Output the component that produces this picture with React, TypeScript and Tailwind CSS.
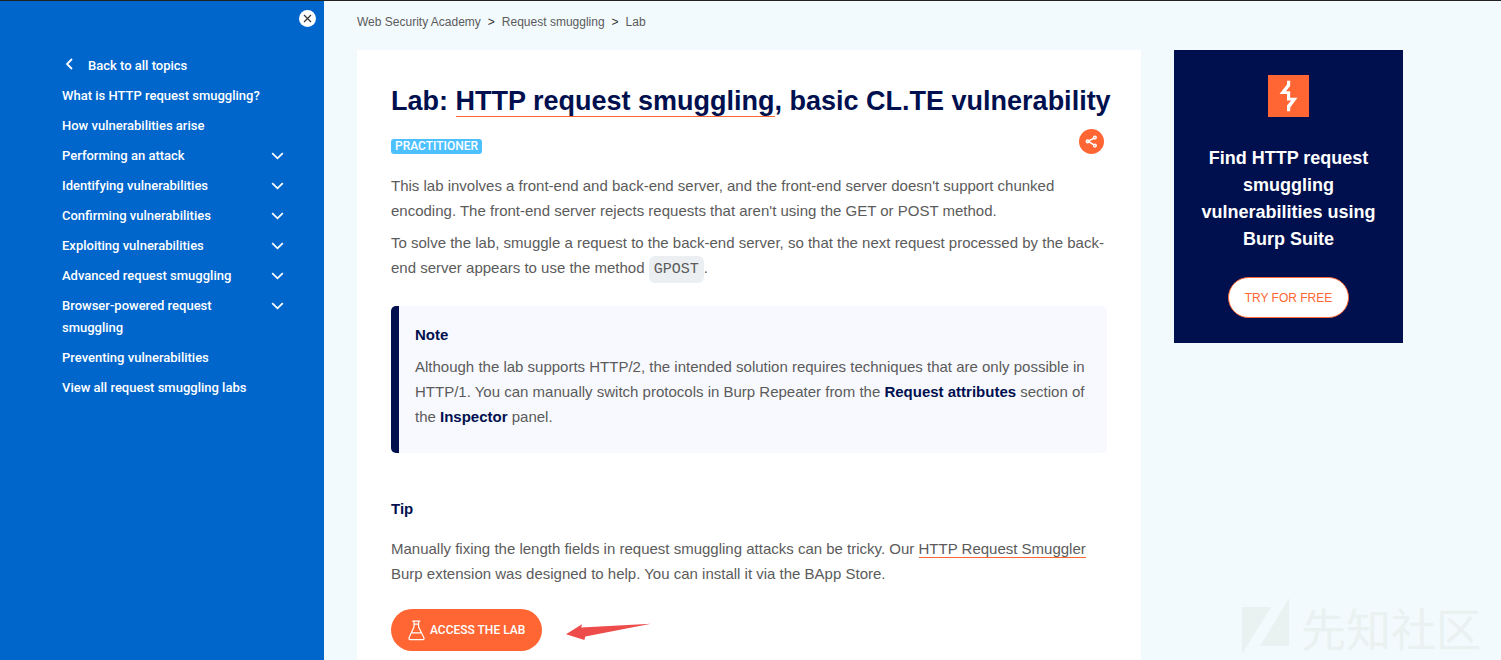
import React from "react";

type NavItem = { label: string; expandable?: boolean };

const navItems: NavItem[] = [
  { label: "What is HTTP request smuggling?" },
  { label: "How vulnerabilities arise" },
  { label: "Performing an attack", expandable: true },
  { label: "Identifying vulnerabilities", expandable: true },
  { label: "Confirming vulnerabilities", expandable: true },
  { label: "Exploiting vulnerabilities", expandable: true },
  { label: "Advanced request smuggling", expandable: true },
  { label: "Browser-powered request smuggling", expandable: true },
  { label: "Preventing vulnerabilities" },
  { label: "View all request smuggling labs" },
];

function Sidebar() {
  return (
    <aside className="flex w-[324px] shrink-0 flex-col bg-[#0066cc] font-[Roboto,sans-serif] text-[13px] leading-[22px] font-medium text-white">
      <div className="flex justify-end pt-[9px] pr-2">
        <button type="button" aria-label="Close menu" className="flex h-[17px] w-[17px] items-center justify-center rounded-full bg-white">
          <svg width="9" height="9" viewBox="0 0 9 9" stroke="#333332" strokeWidth="1.2" fill="none">
            <path d="M1 1 8 8M8 1 1 8" />
          </svg>
        </button>
      </div>
      <nav className="mt-7 flex flex-col gap-2 pr-10 pl-[62px]">
        <a href="#topics" className="flex items-center">
          <svg width="14" height="14" viewBox="0 0 14 14" fill="none" stroke="white" strokeWidth="1.8" className="mb-1 shrink-0">
            <path d="M10 2 5 7l5 5" />
          </svg>
          <span className="ml-3">Back to all topics</span>
        </a>
        {navItems.map((item) => (
          <div key={item.label} className="flex items-start justify-between">
            <a href="#topic" className={item.expandable ? "max-w-[180px]" : ""}>
              {item.label}
            </a>
            {item.expandable && (
              <button type="button" aria-label={`Expand ${item.label}`} className="flex h-[22px] w-[13px] items-center justify-center">
                <svg width="13" height="8" viewBox="0 0 13 8" fill="none" stroke="white" strokeWidth="1.8">
                  <path d="M1.2 1.2 6.5 6.3l5.3-5.1" />
                </svg>
              </button>
            )}
          </div>
        ))}
      </nav>
    </aside>
  );
}

function Breadcrumb() {
  return (
    <nav aria-label="Breadcrumb" className="flex h-[49px] items-start gap-[7px] pt-3 text-[12px] leading-[18px] text-[#5b5b5b]">
      <a href="#academy">Web Security Academy</a>
      <span className="text-[#333332]">&gt;</span>
      <a href="#smuggling">Request smuggling</a>
      <span className="text-[#333332]">&gt;</span>
      <a href="#lab">Lab</a>
    </nav>
  );
}

function LabCard() {
  return (
    <article className="min-w-0 flex-1 bg-white px-[34px] pt-[34px] text-[15px] leading-[25px] text-[#5b5b5b]">
      <h1 className="text-[27px] leading-[34px] font-bold text-[#00104f] lg:whitespace-nowrap">
        Lab:{" "}
        <a href="#smuggling" className="border-b border-[#ff6633]">
          HTTP request smuggling
        </a>
        , basic CL.TE vulnerability
      </h1>
      <div className="mt-[11px] flex items-end justify-between pr-[3px]">
        <span className="rounded-[3px] bg-[#4dc0ff] px-1 font-[Roboto,sans-serif] text-[12px] leading-[15px] font-medium text-white">PRACTITIONER</span>
        <button type="button" aria-label="Share" className="flex h-[25px] w-[25px] items-center justify-center rounded-full bg-[#ff6633]">
          <svg width="13" height="13" viewBox="0 0 13 13" fill="none" stroke="white" strokeWidth="1.5">
            <path d="M9.3 3 3.2 6.2l6.1 4" />
            <circle cx="9.9" cy="2.6" r="1.3" />
            <circle cx="2.6" cy="6.4" r="1.3" />
            <circle cx="9.9" cy="10.6" r="1.3" />
          </svg>
        </button>
      </div>
      <p className="mt-[19px]">
        This lab involves a front-end and back-end server, and the front-end server doesn't support chunked encoding. The front-end server
        rejects requests that aren't using the GET or POST method.
      </p>
      <p className="mt-[7px]">
        To solve the lab, smuggle a request to the back-end server, so that the next request processed by the back-end server appears to use
        the method{" "}
        <code className="rounded-md bg-[#ebeff2] px-[5px] py-[5px] font-['Liberation_Mono',monospace] text-[15px] leading-[14px]">GPOST</code>.
      </p>
      <section className="mt-[26px] rounded-[5px] border-l-8 border-[#00104f] bg-[#f8f9fe] px-4 pt-4 pb-6">
        <h2 className="font-bold text-[#00104f]">Note</h2>
        <p className="mt-[7px]">
          Although the lab supports HTTP/2, the intended solution requires techniques that are only possible in HTTP/1. You can manually
          switch protocols in Burp Repeater from the <b className="text-[#00104f]">Request attributes</b> section of the{" "}
          <b className="text-[#00104f]">Inspector</b> panel.
        </p>
      </section>
      <h2 className="mt-[43px] font-bold text-[#00104f]">Tip</h2>
      <p className="mt-[15px]">
        Manually fixing the length fields in request smuggling attacks can be tricky. Our{" "}
        <a href="#bapp" className="border-b border-[#ff6633]">
          HTTP Request Smuggler
        </a>{" "}
        Burp extension was designed to help. You can install it via the BApp Store.
      </p>
      <div className="mt-[23px] flex items-center gap-[23px]">
        <a
          href="#launch"
          className="flex h-[42px] items-center gap-[5px] rounded-full bg-[#ff6633] px-[17px] font-[Roboto,sans-serif] text-[12px] leading-[18px] font-medium text-white"
        >
          <svg width="17" height="21" viewBox="0 0 17 21" fill="none" stroke="white" strokeWidth="1.2">
            <path d="M4.300 1.200h8M6 1.400v5.600L1.100 17.600q-.6 2 .9 2h13q1.500 0 .9-2L10.600 7v-5.600M6 4.200h4.600M4 12.800h9" />
          </svg>
          ACCESS THE LAB
        </a>
        <svg width="88" height="18" viewBox="0 0 88 18" fill="#ee4b4b" aria-hidden="true" className="mt-1">
          <path d="M1 11.300 17 1.200 16.200 4.600 86 .8 20.300 13.600 19.400 16.900Z" />
        </svg>
      </div>
    </article>
  );
}

function Promo() {
  return (
    <aside className="flex w-[229px] shrink-0 flex-col items-center bg-[#00104f] px-4 py-[25px] text-center text-white">
      <svg width="41" height="42" viewBox="0 0 41 42" aria-label="Burp Suite" role="img">
        <path fill="#ff6633" d="M0 0h41v42H0z" />
        <path fill="white" d="M19 5.700h3.200v5.300l-4.200 5.200h4.200v6.600h7.300l-7.300 9.800v3.700h-3.200v-5.700l4.100-5h-4.100v-6.500h-7.500l7.500-9.500z" />
      </svg>
      <p className="mt-7 text-[18px] leading-[27px] font-bold">Find HTTP request smuggling vulnerabilities using Burp Suite</p>
      <a
        href="#try"
        className="mt-6 flex h-[41px] items-center rounded-full border border-[#ff6633] bg-white px-4 text-[12px] leading-[18px] text-[#ff6633]"
      >
        TRY FOR FREE
      </a>
    </aside>
  );
}

function Watermark() {
  return (
    <div className="pointer-events-none absolute right-5 bottom-0 flex items-center gap-3 text-[#eaf1f1]">
      <svg width="49" height="60" viewBox="0 0 49 60" fill="currentColor" aria-hidden="true">
        <path d="M2 9h29L2 56zM49 0v48H20z" />
      </svg>
      <span className="font-['Noto_Sans_CJK_SC',sans-serif] text-[45px] leading-[64px]">先知社区</span>
    </div>
  );
}

export default function App() {
  return (
    <div className="relative flex min-h-screen border-t border-[#222222] bg-[#f2fafd] font-['Liberation_Sans',Arial,sans-serif]">
      <Sidebar />
      <main className="flex min-w-0 flex-1 flex-col pr-[98px] pl-[33px]">
        <Breadcrumb />
        <div className="flex flex-1 items-start gap-[33px]">
          <div className="flex min-w-0 flex-1 self-stretch">
            <LabCard />
          </div>
          <Promo />
        </div>
      </main>
      <Watermark />
    </div>
  );
}
